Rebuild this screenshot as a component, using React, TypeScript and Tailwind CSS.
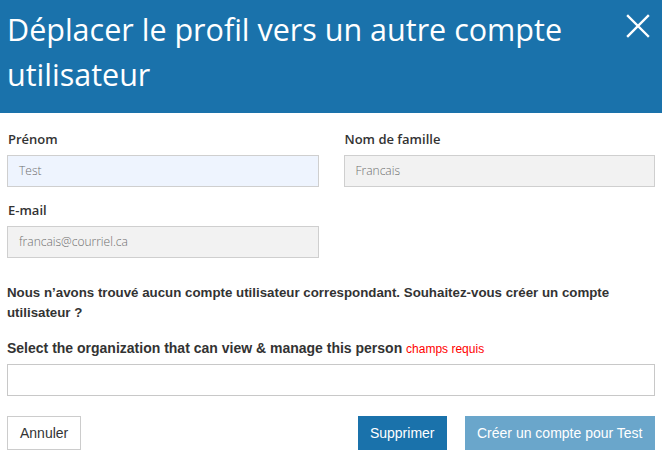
import React from "react";

const Field = ({ label, value, tone }: { label: string; value: string; tone: "blue" | "gray" }) => (
  <div className="flex flex-col">
    <label className="pl-px text-[13px] font-semibold leading-[18px] text-[#333] [font-family:'Open_Sans',sans-serif]">
      {label}
    </label>
    <div
      className={`mt-[7px] flex h-[32px] items-center border border-[#cfcfcf] px-[11px] text-[12px] font-light text-[#6f6f6f] [font-family:'Open_Sans',sans-serif] ${
        tone === "blue" ? "bg-[#eef4fe]" : "bg-[#f2f2f2]"
      }`}
    >
      {value}
    </div>
  </div>
);

export default function App() {
  return (
    <div className="h-[463px] w-[662px] overflow-hidden bg-white">
      {/* header */}
      <div className="flex h-[113px] items-start justify-between bg-[#1a72ab] pl-[7px] pr-[12px] pt-[7px]">
        <h1 className="text-[30.5px] font-normal leading-[45px] text-white [font-family:'Open_Sans',sans-serif]">
          Déplacer le profil vers un autre compte
          <br />
          utilisateur
        </h1>
        <svg width="24" height="24" viewBox="0 0 24 24" className="mt-[7px] shrink-0">
          <path d="M2 2 L22 22 M22 2 L2 22" stroke="white" strokeWidth="2.4" strokeLinecap="square" />
        </svg>
      </div>

      <div className="px-[7px] pt-[17px]">
        <div className="grid grid-cols-2 gap-x-[25px] gap-y-[14px]">
          <Field label="Prénom" value="Test" tone="blue" />
          <Field label="Nom de famille" value="Francais" tone="gray" />
          <Field label="E-mail" value="francais@courriel.ca" tone="gray" />
        </div>

        <p className="mt-[25px] text-[13.3px] font-bold leading-[20px] text-[#333] [font-family:'Liberation_Sans',Arial,sans-serif]">
          Nous n’avons trouvé aucun compte utilisateur correspondant. Souhaitez-vous créer un compte utilisateur ?
        </p>

        <p className="mt-[16px] text-[14px] font-bold leading-[18px] text-[#333] [font-family:'Liberation_Sans',Arial,sans-serif]">
          Select the organization that can view &amp; manage this person{" "}
          <span className="text-[12px] font-normal text-[#f00]">champs requis</span>
        </p>
        <div className="mt-[6px] h-[32px] border border-[#c8c8c8] bg-white" />

        <div className="mt-[20px] flex items-center text-[14px] [font-family:'Liberation_Sans',Arial,sans-serif]">
          <button className="h-[34px] border border-[#cccccc] bg-white px-[12px] text-[#333]">Annuler</button>
          <div className="ml-auto flex gap-[18px]">
            <button className="h-[34px] bg-[#1a72ab] px-[12px] text-white">Supprimer</button>
            <button className="h-[34px] bg-[#6aa6cb] px-[12.5px] text-white">Créer un compte pour Test</button>
          </div>
        </div>
      </div>
    </div>
  );
}
